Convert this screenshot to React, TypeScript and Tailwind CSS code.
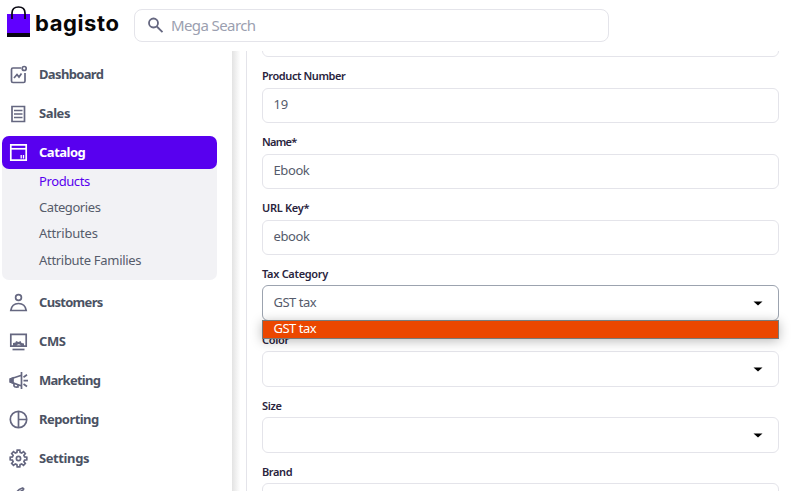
import type { ReactNode } from 'react';

const icons: Record<string, ReactNode> = {
  dashboard: (
    <>
      <path d="M12 3H3.900Q2.500 3 2.500 4.400V16.100Q2.500 17.500 3.900 17.500H14.600Q16 17.500 16 16.100V8" />
      <path d="M5 13L8 9.500L10 12L12.500 8.500" />
      <circle cx="15.200" cy="3.500" r="2" />
    </>
  ),
  sales: (
    <>
      <path d="M3 2.500H15.500V17.500H3Z" />
      <path d="M5 6.500H13.500M5 10H13.500M5 13.500H13.500" />
    </>
  ),
  catalog: (
    <>
      <path d="M1.800 1.800H17.200V17.200H1.800Z" />
      <path d="M2 5.800H17" />
      <path d="M12.200 12V15.500M14.500 12V15.500" strokeWidth="1.300" />
    </>
  ),
  customers: (
    <>
      <circle cx="9.500" cy="4.500" r="2.900" />
      <path d="M1.800 17.500C2.500 12.800 5.500 10.500 9.500 10.500S16.500 12.800 17.200 17.500Z" />
    </>
  ),
  cms: (
    <>
      <path d="M1.800 2.300H17.200V14.200H1.800Z" />
      <path d="M3.500 17.500H15.500" />
      <path d="M4 14V11L6.500 10.500L7 9L9.500 10L11.500 9L12.500 11L15 11.500V14H12A2.300 2.300 0 0 0 7.500 14Z" fill="currentColor" stroke="none" />
    </>
  ),
  marketing: (
    <>
      <path d="M12.500 1V18M12.500 4.200L1.200 8V10.800L12.500 15" />
      <path d="M1.500 8L4 7V12L1.500 11Z" fill="currentColor" />
      <path d="M5 12.500V15Q5.500 16.500 9 16V14M14.500 9.700H19M14.500 6.300L18 3.800M14.500 13L18 15.500" />
    </>
  ),
  reporting: (
    <>
      <circle cx="9.500" cy="9.500" r="8.200" />
      <path d="M9.500 1.500V17.500M9.500 9.500H17.500" />
    </>
  ),
  settings: (
    <>
      <path d="M7.900 3.400L8.200 1.200H10.800L11.100 3.400L12.700 4.100L14.500 2.700L16.300 4.500L14.900 6.300L15.600 7.900L17.800 8.200V10.800L15.600 11.100L14.900 12.700L16.300 14.500L14.500 16.300L12.700 14.900L11.100 15.600L10.800 17.800H8.200L7.900 15.600L6.300 14.900L4.500 16.300L2.700 14.500L4.100 12.700L3.400 11.100L1.200 10.800V8.200L3.400 7.900L4.100 6.300L2.700 4.500L4.500 2.700L6.300 4.100Z" />
      <circle cx="9.500" cy="9.500" r="2.100" />
    </>
  ),
  configure: <path d="M7 6.500Q8 1.500 13.500 0Q15.500 .5 14 2L11.500 3.500L13 6.500" />,
};

function Icon({ name }: { name: string }) {
  return (
    <svg width="19" height="19" viewBox="0 0 19 19" fill="none" stroke="currentColor" strokeWidth="1.700" className="shrink-0 overflow-visible">
      {icons[name]}
    </svg>
  );
}

function Item({ name, label, text }: { name: string; label: string; text: string }) {
  return (
    <div className="flex h-[39px] items-center gap-[11px] pl-[9px] text-[#656780]">
      <Icon name={name} />
      <span className={`pt-px text-[13px] font-bold text-[#4b5263] ${text}`}>{label}</span>
    </div>
  );
}

function Field({ label, value = '', text = '', valueText = '', select = false, open = false }: {
  label: string; value?: string; text?: string; valueText?: string; select?: boolean; open?: boolean;
}) {
  return (
    <div className="relative h-[66px] shrink-0">
      <div className={`flex items-center ${select ? 'h-[20px] pb-[3px]' : 'h-[21px] pb-[4px]'}`}>
        <span className={`whitespace-nowrap text-[11px] font-semibold leading-[16px] text-[#29243d] ${text}`}>{label}</span>
      </div>
      <div className={`flex items-center justify-between rounded-[6px] border bg-white pl-[10.500px] pr-[15px] ${select ? 'h-[36px]' : 'h-[35px]'} ${open ? 'border-[#9ca3af]' : 'border-[#e4e4ea]'}`}>
        <span className={`whitespace-nowrap text-[13px] leading-[18px] text-[#555b6b] ${select ? 'pb-[2px]' : 'pb-[3px]'} ${valueText}`}>{value}</span>
        {select && <svg width="10" height="5" viewBox="0 0 10 5"><path d="M.5 .5H9.500L5 4.500Z" fill="#000" /></svg>}
      </div>
      {open && (
        <div className="absolute left-0 top-[55px] z-10 flex h-[19px] w-full items-center border border-[#777b7b] bg-[#eb4700] pl-[10.500px] pb-[3px] shadow-[0_2px_12px_rgba(0,0,0,0.28)]">
          <span className={`whitespace-nowrap text-[13px] leading-[14px] text-white ${valueText}`}>{value}</span>
        </div>
      )}
    </div>
  );
}

export default function App() {
  return (
    <div className="flex h-[491px] w-[792px] flex-col overflow-hidden bg-white font-['Noto_Sans',sans-serif]">
      <header className="flex h-[51px] shrink-0 items-start">
        <div className="flex w-[134px] items-start pl-[7px] pt-[5px]">
          <svg width="24" height="33" viewBox="0 0 24 33" className="shrink-0">
            <path d="M0 9H23V28H0Z" fill="#6000ff" />
            <path d="M0 28H23V32H0Z" fill="#07050f" />
            <path d="M5 14V8Q5 2 11.500 2T18 8V14" fill="none" stroke="#080711" strokeWidth="1.700" />
          </svg>
          <span className="ml-[4px] mt-[4px] font-['Inter',sans-serif] text-[22px] font-bold leading-[28px] tracking-[0.600px] text-[#070707]">bagisto</span>
        </div>
        <div className="mt-[9px] flex h-[33px] w-[475px] items-center rounded-[8px] border border-[#e4e4ea] pl-[12px]">
          <svg width="17" height="17" viewBox="0 0 17 17" fill="none" stroke="#656780" strokeWidth="1.800"><circle cx="6.500" cy="6" r="4.500" /><path d="M9.800 9.500L15.500 15.200" /></svg>
          <span className="ml-[7px] pb-[2px] text-[15px] leading-[20px] tracking-[-0.600px] text-[#9b9fb0]">Mega Search</span>
        </div>
      </header>
      <div className="flex h-[440px]">
        <nav className="w-[232px] shrink-0 pt-[4px]">
          <Item name="dashboard" label="Dashboard" text="tracking-[-0.650px]" />
          <Item name="sales" label="Sales" text="tracking-[-0.400px]" />
          <div className="ml-[2px] mt-[3px] h-[144px] w-[215px] rounded-[7px] bg-[#f2f2f5]">
            <div className="flex h-[33px] items-center gap-[11px] rounded-[7px] bg-[#5800ef] pl-[7px] text-white">
              <Icon name="catalog" />
              <span className="pt-px text-[13px] font-bold tracking-[-0.500px]">Catalog</span>
            </div>
            <div className="-mt-px flex flex-col pl-[37px] text-[13px] leading-[26px] text-[#565c6b]">
              <span className="tracking-[-0.400px] text-[#5800ef]">Products</span>
              <span className="tracking-[-0.420px]">Categories</span>
              <span className="tracking-[-0.200px]">Attributes</span>
              <span className="pt-px tracking-[-0.300px]">Attribute Families</span>
            </div>
          </div>
          <div className="mt-[3px]">
            <Item name="customers" label="Customers" text="tracking-[-0.700px]" />
            <Item name="cms" label="CMS" text="tracking-[-0.400px]" />
            <Item name="marketing" label="Marketing" text="tracking-[-0.750px]" />
            <Item name="reporting" label="Reporting" text="tracking-[-0.550px]" />
            <Item name="settings" label="Settings" text="tracking-[-0.400px]" />
            <Item name="configure" label="" text="" />
          </div>
        </nav>
        <div className="w-[14px] shrink-0 bg-linear-to-r from-[#e3e3e3] to-white to-60%" />
        <main className="flex h-[440px] w-[533px] shrink-0 flex-col border-l border-[#e4e4ea] pl-[15px]">
          <div className="h-[6px] shrink-0 overflow-hidden">
            <div className="-mt-[30px] h-[36px] rounded-[6px] border border-[#e4e4ea]" />
          </div>
          <div className="mt-[10px] flex flex-col">
            <Field label="Product Number" value="19" text="tracking-[-0.420px]" valueText="tracking-[-0.300px]" />
            <Field label="Name*" value="Ebook" text="tracking-[-0.700px]" valueText="tracking-[-0.400px]" />
            <Field label="URL Key*" value="ebook" text="tracking-[-0.300px]" valueText="tracking-[-0.400px]" />
            <Field label="Tax Category" value="GST tax" text="tracking-[-0.300px]" valueText="tracking-[-0.500px]" select open />
            <Field label="Color" select text="tracking-[-0.300px]" />
            <Field label="Size" select text="tracking-[-0.300px]" />
            <Field label="Brand" select text="tracking-[-0.400px]" />
          </div>
        </main>
      </div>
    </div>
  );
}
